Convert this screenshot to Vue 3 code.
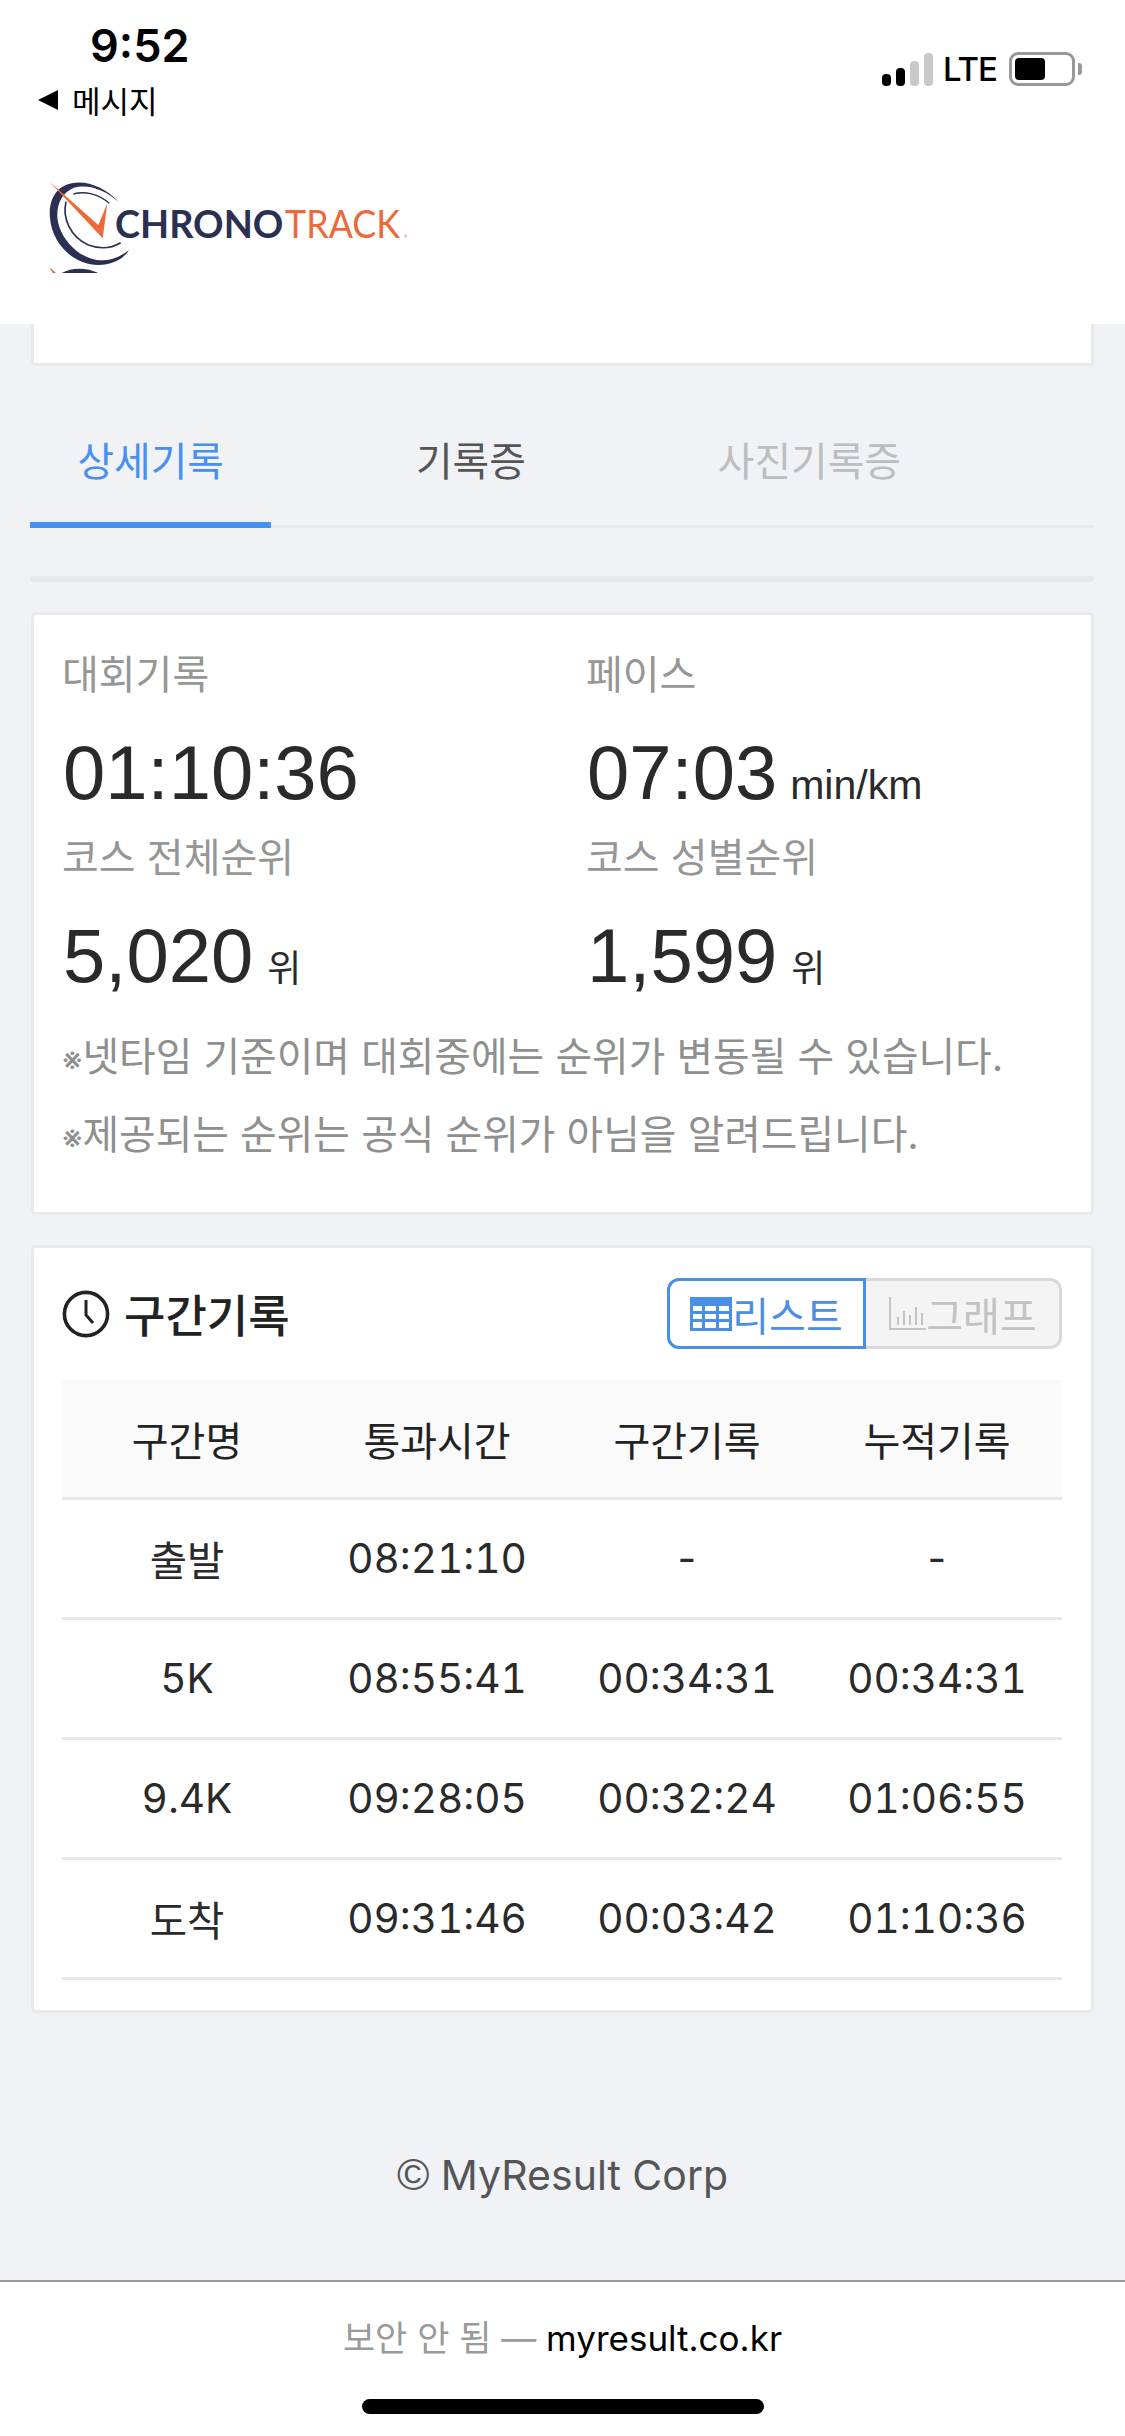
<script setup>
const stats = [
  { label: '대회기록', value: '01:10:36' },
  { label: '페이스', value: '07:03', unit: 'min/km', unitClass: 'pace' },
  { label: '코스 전체순위', value: '5,020', unit: '위' },
  { label: '코스 성별순위', value: '1,599', unit: '위' },
]

const notes = [
  '넷타임 기준이며 대회중에는 순위가 변동될 수 있습니다.',
  '제공되는 순위는 공식 순위가 아님을 알려드립니다.',
]

const columns = ['구간명', '통과시간', '구간기록', '누적기록']

const rows = [
  ['출발', '08:21:10', '-', '-'],
  ['5K', '08:55:41', '00:34:31', '00:34:31'],
  ['9.4K', '09:28:05', '00:32:24', '01:06:55'],
  ['도착', '09:31:46', '00:03:42', '01:10:36'],
]
</script>

<template>
  <div class="page">
    <header class="header">
      <div class="status">
        <div class="status-left">
          <div class="clock">9:52</div>
          <div class="back"><span class="back-arrow"></span>메시지</div>
        </div>
        <div class="status-right">
          <div class="signal">
            <span class="bar b1"></span>
            <span class="bar b2"></span>
            <span class="bar b3"></span>
            <span class="bar b4"></span>
          </div>
          <span class="lte">LTE</span>
          <div class="battery"><span class="battery-fill"></span></div>
          <span class="battery-nub"></span>
        </div>
      </div>
      <svg class="logo" width="400" height="113" viewBox="0 0 1200 339">
        <path fill="#2b2f52" d="M265 125C225 82 170 60 125 70C75 80 55 125 60 175C66 250 130 315 205 315C245 315 280 298 297 270C270 292 235 305 200 300C140 290 86 230 82 170C80 130 98 98 130 84C175 70 225 90 265 125Z" />
        <path fill="none" stroke="#2b2f52" stroke-width="5" d="M108 125C96 175 122 232 175 255C210 268 245 264 272 248" />
        <path fill="none" stroke="#2b2f52" stroke-width="4" d="M130 102C165 92 205 102 238 130" />
        <path fill="#ec6a3a" d="M57 64L218 235L232 130L205 195Z" />
        <text x="255" y="234" class="logo-dark" textLength="505" lengthAdjust="spacingAndGlyphs">CHRONO</text>
        <text x="765" y="234" class="logo-orange" textLength="345" lengthAdjust="spacingAndGlyphs">TRACK</text>
        <circle cx="1127" cy="228" r="5" fill="#f3c4ae" />
        <path fill="#ec6a3a" d="M57 320L78 339H68Z" />
        <path fill="#2b2f52" d="M95 339C125 322 170 322 205 339Z" />
      </svg>
    </header>

    <main class="content">
      <div class="top-card"></div>

      <nav class="tabs">
        <span class="tab active">상세기록</span>
        <span class="tab">기록증</span>
        <span class="tab disabled">사진기록증</span>
      </nav>
      <div class="rule"></div>

      <section class="card summary">
        <div class="stats">
          <div v-for="s in stats" :key="s.label" class="stat">
            <div class="stat-label">{{ s.label }}</div>
            <div class="stat-value">
              {{ s.value }}<span v-if="s.unit" class="stat-unit" :class="s.unitClass">{{ s.unit }}</span>
            </div>
          </div>
        </div>
        <p v-for="n in notes" :key="n" class="note"><span class="note-mark">※</span>{{ n }}</p>
      </section>

      <section class="card splits">
        <div class="splits-head">
          <h3 class="splits-title">
            <svg width="48" height="48" viewBox="0 0 48 48" fill="none" stroke="#222" stroke-width="3.6">
              <circle cx="24" cy="24" r="21.6" />
              <path d="M24 10V25L31 33" stroke-width="3" />
            </svg>
            구간기록
          </h3>
          <div class="toggle">
            <button class="toggle-btn on">
              <svg width="42" height="34" viewBox="0 0 42 34">
                <path fill="#4a8fe3" d="M0 0H42V34H0ZM3 9V14H12V9ZM15 9V14H26V9ZM29 9V14H39V9ZM3 17V22H12V17ZM15 17V22H26V17ZM29 17V22H39V17ZM3 25V31H12V25ZM15 25V31H26V25ZM29 25V31H39V25Z" fill-rule="evenodd" />
              </svg>리스트
            </button>
            <button class="toggle-btn">
              <svg width="38" height="34" viewBox="0 0 38 34" fill="none" stroke="#c4c4c4">
                <path stroke-width="2" d="M2 0V32H38" />
                <path stroke-width="2" d="M10 20V28M16 14V28M22 18V28M28 10V28M34 16V28" />
              </svg>그래프
            </button>
          </div>
        </div>

        <table class="table">
          <thead>
            <tr>
              <th v-for="c in columns" :key="c">{{ c }}</th>
            </tr>
          </thead>
          <tbody>
            <tr v-for="r in rows" :key="r[0]">
              <td v-for="(cell, i) in r" :key="i">{{ cell }}</td>
            </tr>
          </tbody>
        </table>
      </section>

      <footer class="copyright"><span class="copy-mark">©</span> MyResult Corp</footer>
    </main>

    <div class="browser-bar">
      <div class="url"><span class="insecure">보안 안 됨 — </span>myresult.co.kr</div>
      <div class="home-bar"></div>
    </div>
  </div>
</template>

<style>
html, body {
  margin: 0;
  background: #fff;
}
</style>

<style scoped>
.page {
  width: 1125px;
  height: 2436px;
  display: flex;
  flex-direction: column;
  overflow: hidden;
  font-family: Inter, "Noto Sans CJK KR", sans-serif;
  background: #f0f2f6;
  color: #222;
}

.header {
  height: 324px;
  background: #fff;
  position: relative;
  flex: none;
}

.status {
  display: flex;
  justify-content: space-between;
  padding: 0 43px 0 38px;
}

.clock {
  font-family: Inter, sans-serif;
  font-size: 45px;
  font-weight: 600;
  line-height: 48px;
  margin: 22px 0 0 52px;
  color: #000;
}

.back {
  display: flex;
  align-items: center;
  font-family: "Noto Sans CJK KR", sans-serif;
  font-size: 31px;
  line-height: 40px;
  margin-top: 10px;
  color: #000;
}

.back-arrow {
  width: 0;
  height: 0;
  border-top: 10px solid transparent;
  border-bottom: 10px solid transparent;
  border-right: 20px solid #000;
  margin-right: 14px;
}

.status-right {
  display: flex;
  align-items: center;
  height: 34px;
  margin-top: 52px;
}

.signal {
  display: flex;
  align-items: flex-end;
  gap: 5px;
  height: 33px;
}

.bar {
  width: 9px;
  border-radius: 4px;
  background: #000;
}

.b1 { height: 12px; }
.b2 { height: 18px; }
.b3 { height: 25px; background: #c9c9c9; }
.b4 { height: 33px; background: #c9c9c9; }

.lte {
  font-family: Inter, sans-serif;
  font-size: 33px;
  font-weight: 500;
  letter-spacing: -1px;
  margin: 0 12px 0 10px;
  color: #000;
}

.battery {
  box-sizing: border-box;
  width: 66px;
  height: 34px;
  border: 3px solid #999;
  border-radius: 9px;
  padding: 3px;
}

.battery-fill {
  display: block;
  width: 30px;
  height: 22px;
  border-radius: 4px;
  background: #000;
}

.battery-nub {
  width: 4px;
  height: 12px;
  margin-left: 3px;
  background: #999;
  border-radius: 0 3px 3px 0;
}

.logo {
  position: absolute;
  left: 30px;
  top: 160px;
}

.logo-dark {
  font-family: Lato, sans-serif;
  font-size: 115px;
  font-weight: 700;
  fill: #2b2f52;
}

.logo-orange {
  font-family: Lato, sans-serif;
  font-size: 115px;
  fill: #ec6a3a;
}

.content {
  flex: 1;
  display: flex;
  flex-direction: column;
}

.top-card {
  height: 39px;
  margin: 0 31px;
  background: #fff;
  border: 3px solid #e9eaec;
  border-top: 0;
  border-radius: 0 0 4px 4px;
  flex: none;
}

.tabs {
  display: flex;
  gap: 97px;
  margin: 0 31px 0 30px;
  padding-top: 64px;
  border-bottom: 3px solid #e9eaec;
  height: 95px;
  flex: none;
}

.tab {
  height: 95px;
  padding: 0 47.5px;
  font-size: 39.8px;
  line-height: 64px;
  color: #555;
}

.tab.active {
  color: #4790f0;
  border-bottom: 6px solid #4790f0;
  margin-bottom: -3px;
  height: 92px;
}

.tab.disabled {
  color: #bcbdbf;
}

.rule {
  height: 6px;
  margin: 48px 31px 30px 30px;
  background: #e6e7e8;
  border-radius: 3px;
  flex: none;
}

.card {
  box-sizing: border-box;
  margin: 0 31px;
  background: #fff;
  border: 3px solid #e9eaec;
  border-radius: 5px;
  flex: none;
}

.summary {
  height: 603px;
  padding: 30px 29px 0 28px;
}

.stats {
  display: grid;
  grid-template-columns: 524px 1fr;
  grid-auto-rows: 183px;
}

.stat-label {
  font-size: 40px;
  line-height: 60px;
  color: #969696;
}

.stat-value {
  font-family: "Liberation Sans", "Noto Sans CJK KR", sans-serif;
  font-size: 76px;
  line-height: 60px;
  margin: 38px 0 0 1px;
  color: #2a2a2a;
  white-space: nowrap;
}

.stat-unit {
  font-size: 37px;
  margin-left: 14px;
}

.stat-unit.pace {
  font-size: 41px;
  margin-left: 13px;
}

.note {
  margin: 0;
  height: 78px;
  font-size: 39.8px;
  line-height: 78px;
  color: #8f8f8f;
  white-space: nowrap;
  position: relative;
  top: 7px;
}

.note-mark {
  font-size: 32px;
  line-height: 0;
}

.splits {
  height: 768px;
  margin-top: 30px;
  padding: 30px 29px 0 28px;
}

.splits-head {
  display: flex;
  justify-content: space-between;
  align-items: center;
  height: 71px;
  margin-bottom: 31px;
}

.splits-title {
  display: flex;
  align-items: center;
  gap: 14px;
  margin: 0;
  font-size: 45px;
  font-weight: 500;
  color: #222;
}

.toggle {
  display: flex;
}

.toggle-btn {
  box-sizing: border-box;
  display: flex;
  align-items: center;
  justify-content: center;
  height: 71px;
  width: 196px;
  padding: 0;
  font-family: inherit;
  font-size: 40px;
  color: #c2c2c2;
  background: #f4f4f4;
  border: 3px solid #d9d9d9;
  border-left: 0;
  border-radius: 0 12px 12px 0;
}

.toggle-btn.on {
  width: 199px;
  color: #4a8fe3;
  background: #fff;
  border: 3px solid #4a8fe3;
  border-radius: 12px 0 0 12px;
}

.table {
  width: 1000px;
  border-collapse: collapse;
  table-layout: fixed;
  font-size: 40.6px;
  font-variant-numeric: tabular-nums;
  text-align: center;
}

.table th {
  height: 117px;
  padding: 0;
  font-size: 40px;
  font-weight: 400;
  background: #fafafa;
  border-bottom: 3px solid #e8e8e8;
}

.table td {
  height: 117px;
  padding: 0;
  border-bottom: 3px solid #e8e8e8;
  color: #2a2a2a;
}

.copyright {
  margin-top: 136px;
  text-align: center;
  font-size: 41px;
  line-height: 52px;
  color: #555;
}

.copy-mark {
  font-family: "Liberation Sans", sans-serif;
  font-size: 44px;
  line-height: 0;
}

.browser-bar {
  box-sizing: border-box;
  height: 156px;
  flex: none;
  background: #fff;
  border-top: 2px solid #9a9a9a;
  display: flex;
  flex-direction: column;
  align-items: center;
}

.url {
  margin-top: 34px;
  font-size: 35px;
  line-height: 44px;
  color: #000;
}

.insecure {
  color: #9a9a9a;
}

.home-bar {
  width: 402px;
  height: 15px;
  margin-top: 39px;
  border-radius: 8px;
  background: #000;
}
</style>
